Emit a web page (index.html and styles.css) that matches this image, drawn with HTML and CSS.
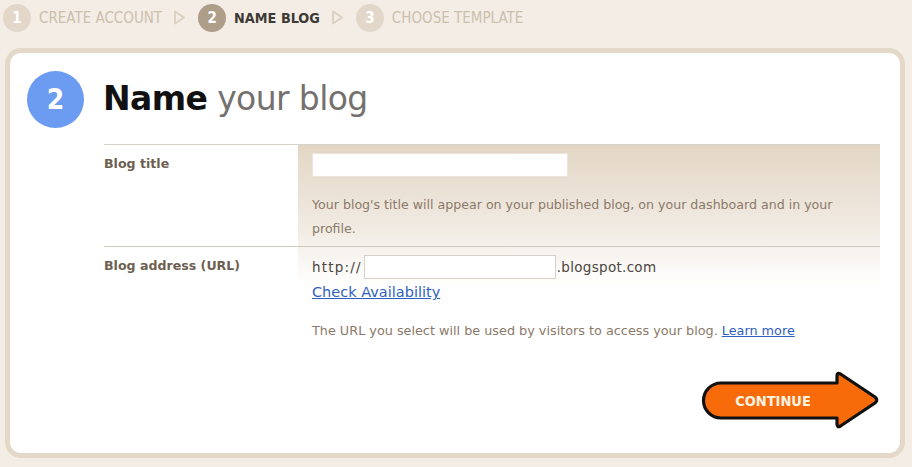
FILE: index.html
```html
<!DOCTYPE html>
<html lang="en">
<head>
<meta charset="utf-8">
<title>Name your blog</title>
<link rel="stylesheet" href="styles.css">
</head>
<body>
<nav class="steps">
  <div class="step"><span class="dot">1</span><span class="label">CREATE ACCOUNT</span></div>
  <svg class="sep" width="13" height="15" viewBox="0 0 13 15"><path d="M2 1.5 L11 7.5 L2 13.5 Z" fill="none" stroke="#ddd1c2" stroke-width="2" stroke-linejoin="round"/></svg>
  <div class="step current"><span class="dot">2</span><span class="label">NAME BLOG</span></div>
  <svg class="sep" width="13" height="15" viewBox="0 0 13 15"><path d="M2 1.5 L11 7.5 L2 13.5 Z" fill="none" stroke="#ddd1c2" stroke-width="2" stroke-linejoin="round"/></svg>
  <div class="step"><span class="dot">3</span><span class="label">CHOOSE TEMPLATE</span></div>
</nav>
<main class="card">
  <header class="head">
    <span class="num">2</span>
    <h1><b>Name</b> your blog</h1>
  </header>
  <div class="form">
    <div class="row">
      <div class="label-col">Blog title</div>
      <div class="field-col">
        <input class="title-input" type="text">
        <p class="help">Your blog's title will appear on your published blog, on your dashboard and in your profile.</p>
      </div>
    </div>
    <div class="row">
      <div class="label-col">Blog address (URL)</div>
      <div class="field-col">
        <div class="url-line"><span>http://</span><input class="url-input" type="text"><span>.blogspot.com</span></div>
        <a class="check" href="#">Check Availability</a>
        <p class="help help2">The URL you select will be used by visitors to access your blog. <a href="#">Learn more</a></p>
      </div>
    </div>
  </div>
  <div class="actions">
    <button class="continue" type="button">
      <svg width="180" height="60" viewBox="0 0 180 60">
        <path d="M21 13 L137 13 L137 6 Q137 2 140.5 4 L175 27 Q178.5 30 175 33 L140.5 56 Q137 58 137 54 L137 48 L21 48 A17.5 17.5 0 0 1 21 13 Z" fill="#f76b0b" stroke="#111" stroke-width="3.2" stroke-linejoin="round"/>
        <text x="73" y="36" text-anchor="middle" class="cont-text">CONTINUE</text>
      </svg>
    </button>
  </div>
</main>
</body>
</html>
```
FILE: styles.css
```css
html, body {
  margin: 0;
  padding: 0;
}
body {
  background: #f4ede5;
  font-family: "DejaVu Sans", Verdana, sans-serif;
  width: 912px;
  height: 467px;
  overflow: hidden;
}
.steps {
  display: flex;
  align-items: center;
  height: 35px;
  padding-left: 3px;
}
.step {
  display: flex;
  align-items: center;
  gap: 8px;
}
.dot {
  width: 28px;
  height: 28px;
  border-radius: 50%;
  background: #e2d7c8;
  color: #fff;
  font-family: "DejaVu Sans Condensed", "DejaVu Sans", sans-serif;
  font-weight: bold;
  font-size: 15px;
  display: flex;
  align-items: center;
  justify-content: center;
}
.label {
  font-family: "DejaVu Sans Condensed", "DejaVu Sans", sans-serif;
  font-size: 15px;
  color: #cbbfae;
}
.step.current .dot {
  background: #ae9d88;
}
.step.current .label {
  color: #3d3935;
  font-weight: bold;
  font-size: 14.3px;
}
.sep {
  margin: 0 12px 0 11px;
}
.card {
  margin: 13px 7px 0 5px;
  height: 410px;
  box-sizing: border-box;
  border: 5px solid #e4d8c8;
  border-radius: 16px;
  background: #fff;
  padding: 0 20px 23px 17px;
  display: flex;
  flex-direction: column;
}
.head {
  display: flex;
  align-items: center;
  height: 91px;
  gap: 19px;
}
.num {
  width: 57px;
  height: 57px;
  border-radius: 50%;
  background: #6b9cf1;
  color: #fff;
  font-family: "DejaVu Sans Condensed", "DejaVu Sans", sans-serif;
  font-weight: bold;
  font-size: 28px;
  display: flex;
  align-items: center;
  justify-content: center;
  margin-top: 2px;
}
.head h1 {
  margin: 0;
  font-family: "DejaVu Sans", sans-serif;
  font-weight: normal;
  font-size: 33px;
  color: #74716e;
  letter-spacing: -0.6px;
}
.head h1 b {
  color: #111;
  font-weight: bold;
}
.form {
  margin-left: 77px;
  border-top: 1px solid #d9d2c9;
  background-image: linear-gradient(to bottom, #e3d6c4 0%, #f1ebe3 60%, #ffffff 100%);
  background-repeat: no-repeat;
  background-position: 194px 0;
  background-size: calc(100% - 194px) 140px;
}
.row {
  display: grid;
  grid-template-columns: 194px 1fr;
}
.row + .row {
  border-top: 1px solid #cfc8be;
}
.label-col {
  font-size: 12.6px;
  font-weight: bold;
  color: #6e5f51;
  padding-top: 11px;
}
.field-col {
  padding: 8px 0 0 14px;
}
.title-input {
  display: block;
  width: 256px;
  height: 24px;
  box-sizing: border-box;
  border: 1px solid #ece4da;
  background: #fff;
  margin: 0;
  padding: 0;
  outline: none;
}
.help {
  margin: 16px 0 0;
  font-size: 12.6px;
  line-height: 24px;
  color: #8b7969;
  padding-right: 40px;
  padding-bottom: 5px;
}
.url-line {
  display: flex;
  align-items: center;
  font-size: 13.5px;
  letter-spacing: 0.3px;
  color: #4c4540;
  height: 24px;
}
.url-line span:first-child {
  letter-spacing: 1.2px;
}
.url-input {
  width: 192px;
  height: 24px;
  box-sizing: border-box;
  border: 1px solid #d6d0c9;
  background: #fff;
  margin: 0 1px 0 2px;
  padding: 0;
}
.check {
  display: inline-block;
  margin-top: 5px;
  font-size: 14.5px;
  color: #2f5fc0;
  text-decoration: underline;
}
.help2 {
  margin-top: 18px;
  padding: 0;
  font-size: 12.8px;
}
.help2 a {
  color: #2f5fc0;
}
.actions {
  display: flex;
  justify-content: flex-end;
  margin-top: auto;
  padding-right: 0;
}
.continue {
  border: 0;
  background: none;
  padding: 0;
  margin: 0;
  width: 180px;
  height: 60px;
  cursor: pointer;
}
.continue svg {
  display: block;
}
.cont-text {
  fill: #fff3e2;
  font-family: "DejaVu Sans Condensed", "DejaVu Sans", sans-serif;
  font-weight: bold;
  font-size: 14.5px;
}
```
